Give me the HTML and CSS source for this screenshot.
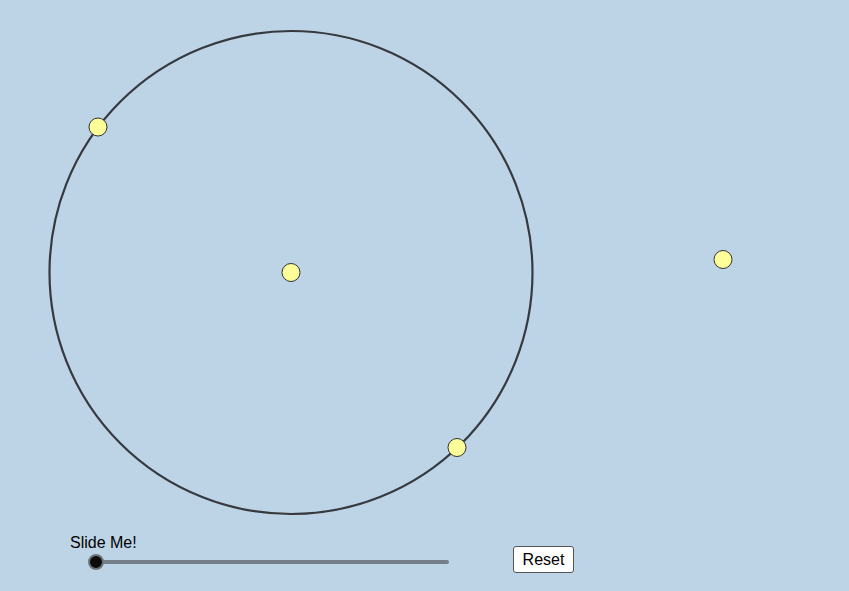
FILE: index.html
```html
<!DOCTYPE html>
<html>
<head>
<meta charset="utf-8">
<link rel="stylesheet" href="styles.css">
</head>
<body>
<div class="stage">
  <svg class="canvas" width="849" height="591" viewBox="0 0 849 591">
    <circle class="circ" cx="291" cy="272.5" r="241.5"/>
    <circle class="pt" cx="98" cy="127" r="9"/>
    <circle class="pt" cx="291" cy="272.5" r="9"/>
    <circle class="pt" cx="457" cy="447.5" r="9"/>
    <circle class="pt" cx="723" cy="259.5" r="9"/>
  </svg>
  <div class="slider">
    <div class="slider-label">Slide Me!</div>
    <div class="track"><span class="knob"></span></div>
  </div>
  <button class="reset">Reset</button>
</div>
</body>
</html>
```
FILE: styles.css
```css
html, body {
  margin: 0;
  padding: 0;
  background: #bdd3e6;
  font-family: "Liberation Sans", Arial, sans-serif;
}
.stage {
  position: relative;
  width: 849px;
  height: 591px;
  overflow: hidden;
  background: #bdd3e6;
}
.canvas {
  position: absolute;
  left: 0;
  top: 0;
}
.circ {
  fill: none;
  stroke: #363a3e;
  stroke-width: 2.2;
}
.pt {
  fill: #ffff99;
  stroke: #333333;
  stroke-width: 1;
}
.slider {
  position: absolute;
  left: 70px;
  top: 533px;
  width: 381px;
}
.slider-label {
  font-size: 16px;
  line-height: 19px;
  color: #000;
}
.track {
  position: relative;
  margin: 8px 0 0 24px;
  width: 355px;
  height: 4px;
  border-radius: 2px;
  background: #747f89;
}
.knob {
  position: absolute;
  left: -6px;
  top: -6px;
  width: 12px;
  height: 12px;
  border-radius: 50%;
  background: #0b0b0b;
  border: 2px solid #6e7378;
}
.reset {
  position: absolute;
  left: 513px;
  top: 546px;
  width: 61px;
  height: 27px;
  padding: 0;
  background: #fff;
  border: 1px solid #555;
  border-radius: 3px;
  font-family: "Liberation Sans", Arial, sans-serif;
  font-size: 16px;
  color: #000;
}
```
